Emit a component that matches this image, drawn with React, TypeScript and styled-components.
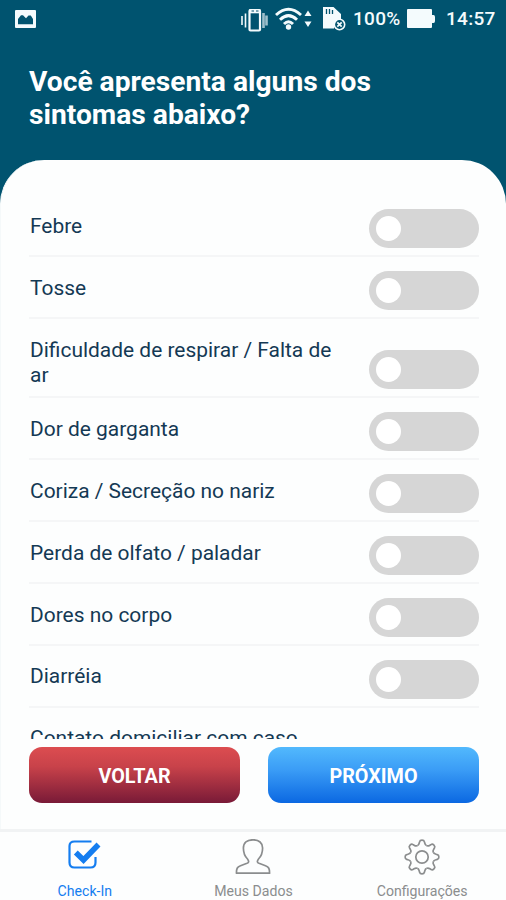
import React from "react";
import styled, { createGlobalStyle } from "styled-components";

const GlobalStyle = createGlobalStyle`
  * { box-sizing: border-box; }
  body { margin: 0; background: #fdfefe; font-family: Roboto, sans-serif; }
  svg { display: block; flex: none; }
`;

const Screen = styled.div`
  width: 506px;
  height: 900px;
  display: flex;
  flex-direction: column;
  overflow: hidden;
  background: #00536f;
`;

const StatusBar = styled.div`
  height: 40px;
  flex: none;
  display: flex;
  align-items: center;
  padding: 0 11px 3px 15px;
  color: #f4fbfd;
`;

const StatusGroup = styled.div`
  margin-left: auto;
  display: flex;
  align-items: center;
`;

const StatusText = styled.span<{ $width: number; $gap: number }>`
  width: ${(p) => p.$width}px;
  margin-left: ${(p) => p.$gap}px;
  font-size: 19px;
  font-weight: 500;
  line-height: 24px;
  letter-spacing: 0.3px;
  white-space: nowrap;
`;

const Title = styled.h1`
  flex: none;
  height: 120px;
  margin: 0;
  padding: 25px 29px 0;
  color: #fff;
  font-size: 28.2px;
  font-weight: 700;
  line-height: 33px;
`;

const Sheet = styled.main`
  flex: 1;
  min-height: 0;
  display: flex;
  flex-direction: column;
  padding: 35.5px 27px 0 28px;
  background: #fdfefe;
  border-left: 1px solid #f5f9fa;
  border-radius: 44px 44px 0 0;
`;

const List = styled.div`
  height: 543px;
  flex: none;
  overflow: hidden;
`;

const Row = styled.div`
  min-height: 61.9px;
  display: flex;
  align-items: flex-end;
  justify-content: space-between;
  padding: 18.8px 0 7px;
  border-bottom: 2px solid #f5f6f7;
`;

const Label = styled.span`
  align-self: flex-start;
  width: 316px;
  padding: 0 0 1px 1px;
  color: #143954;
  font-size: 20.95px;
  line-height: 25px;
`;

const Toggle = styled.button`
  width: 110px;
  height: 39px;
  flex: none;
  margin: -19px 0 0;
  padding: 0 7px;
  border: 0;
  border-radius: 20px;
  background: #d6d6d6;
  display: flex;
  align-items: center;
`;

const Knob = styled.span`
  width: 25px;
  height: 25px;
  border-radius: 50%;
  background: #fff;
`;

const Actions = styled.div`
  display: flex;
  justify-content: space-between;
  margin-top: 8.5px;
`;

const ActionButton = styled.button<{ $tone: "back" | "next" }>`
  width: 211px;
  height: 56px;
  padding: 2px 0 0;
  border: 0;
  border-radius: 13px;
  color: #fff;
  font-family: inherit;
  font-size: 19.8px;
  font-weight: 700;
  background: ${(p) =>
    p.$tone === "back"
      ? "linear-gradient(#dc4d50, #c8424a 35%, #791a37)"
      : "linear-gradient(#52b9fd, #3b9df6 40%, #0b68e2)"};
`;

const TabBar = styled.nav`
  height: 71px;
  flex: none;
  display: grid;
  grid-template-columns: repeat(3, 1fr);
  border-top: 3px solid #f1f3f4;
  background: #fdfefe;
`;

const Tab = styled.div<{ $active?: boolean }>`
  display: flex;
  flex-direction: column;
  align-items: center;
  padding: 7px 0 0 1px;
  color: ${(p) => (p.$active ? "#147df0" : "#8b8d8e")};
`;

const TabLabel = styled.span`
  margin-top: 7px;
  font-size: 14.1px;
  line-height: 18px;
`;

const symptoms = [
  "Febre",
  "Tosse",
  "Dificuldade de respirar / Falta de ar",
  "Dor de garganta",
  "Coriza / Secreção no nariz",
  "Perda de olfato / paladar",
  "Dores no corpo",
  "Diarréia",
  "Contato domiciliar com caso confirmado",
];

const PictureIcon = () => (
  <svg width="21" height="18" viewBox="0 0 21 18" fill="currentColor">
    <path fillRule="evenodd" d="M1 0H20Q21 0 21 1V17Q21 18 20 18H1Q0 18 0 17V1Q0 0 1 0ZM3 14.200H18V9L15.800 5.500H13.500L11 8.200 8 5.200H6L3 9Z" />
  </svg>
);

const StatusIcons = () => (
  <svg width="105" height="26" viewBox="241 5 105 26" fill="none" stroke="currentColor">
    <path d="M242 15V24M245.500 12.500V26.500" strokeWidth="1.600" />
    <path d="M263.500 12V27M266.500 14.500V24.500" strokeWidth="2.600" opacity=".65" />
    <rect x="249.500" y="9" width="10.500" height="20.500" rx="1" strokeWidth="2.200" />
    <path d="M249 10.300H260.500" strokeWidth="4" />
    <path d="M251.500 10H254M256 10H258.500" strokeWidth="1" stroke="#00536f" />
    <path d="M276 14Q288.500 2.500 301 14M280 18.700Q288.500 10.500 297 18.700M284 23Q288.500 18.500 293 23" strokeWidth="2.900" />
    <circle cx="288.500" cy="26" r="2.700" fill="currentColor" stroke="none" />
    <path d="M304.500 15L308 9.500 311.500 15ZM304.500 20.500H311.500L308 26Z" fill="currentColor" stroke="none" />
    <path d="M323 6H333.500L341 13V19L334 25.500V27.500H323Z" fill="currentColor" stroke="none" />
    <path d="M326.500 8V13M329.500 8V13M332.500 9V13" stroke="#00536f" strokeWidth="1.300" />
    <circle cx="339.500" cy="23.500" r="5.200" fill="#00536f" strokeWidth="1.600" />
    <path d="M337.300 21.300L341.700 25.700M341.700 21.300L337.300 25.700" strokeWidth="1.700" />
  </svg>
);

const BatteryIcon = () => (
  <svg width="28" height="20" viewBox="0 0 28 20" fill="currentColor">
    <path d="M1 0H24Q25 0 25 1V6H26.500Q28 6 28 8V12Q28 14 26.500 14H25V18Q25 19 24 19H1Q0 19 0 18V1Q0 0 1 0Z" />
  </svg>
);

const CheckIcon = () => (
  <svg width="36" height="36" viewBox="1 2 36 36" fill="none" stroke="currentColor">
    <path d="M25.500 4.500H8.500Q3.500 4.500 3.500 9V25.500Q3.500 30.500 8.500 30.500H24.500Q29.500 30.500 29.500 25.500V20" strokeWidth="2.200" />
    <path d="M9.800 15.500L17.500 23 32.500 7.500" strokeWidth="5.500" />
  </svg>
);

const PersonIcon = () => (
  <svg width="36" height="36" viewBox="0 1 36 36" fill="none" stroke="currentColor" strokeWidth="1.700" strokeLinejoin="round">
    <path d="M18 1.800C12 1.800 8.400 4.900 8.400 10C8.400 14.500 10 18.500 12.500 21C14.300 23.500 13.800 24.500 12 25.300L5.500 27.800C2 29.200 1.500 30.500 1.400 35.200H34.600C34.500 30.500 34 29.200 30.500 27.800L24 25.300C22.200 24.500 21.700 23.500 23.500 21C26 18.500 27.600 14.500 27.600 10C27.600 4.900 24 1.800 18 1.800Z" />
  </svg>
);

const gearTooth =
  "M-4.700 -11.350C-2.800 -11.800 -3 -13.500 -2.400 -15.300C-1.900 -17.400 1.900 -17.400 2.400 -15.300C3 -13.500 2.800 -11.800 4.700 -11.350";

const GearIcon = () => (
  <svg width="36" height="36" viewBox="-18 -18 36 36" fill="none" stroke="currentColor" strokeWidth="1.700">
    {[0, 45, 90, 135, 180, 225, 270, 315].map((angle) => (
      <path key={angle} d={gearTooth} transform={`rotate(${angle})`} />
    ))}
    <circle r="6.200" />
  </svg>
);

export default function App() {
  return (
    <>
      <GlobalStyle />
      <Screen>
        <StatusBar>
          <PictureIcon />
          <StatusGroup>
            <StatusIcons />
            <StatusText $width={48} $gap={7}>100%</StatusText>
            <StatusText as="div" $width={28} $gap={6}><BatteryIcon /></StatusText>
            <StatusText $width={49} $gap={11}>14:57</StatusText>
          </StatusGroup>
        </StatusBar>
        <Title>Você apresenta alguns dos sintomas abaixo?</Title>
        <Sheet>
          <List>
            {symptoms.map((symptom, index) => (
              <Row key={symptom}>
                <Label>{symptom}</Label>
                {index < 8 && (
                  <Toggle role="switch" aria-checked={false} aria-label={symptom}>
                    <Knob />
                  </Toggle>
                )}
              </Row>
            ))}
          </List>
          <Actions>
            <ActionButton $tone="back">VOLTAR</ActionButton>
            <ActionButton $tone="next">PRÓXIMO</ActionButton>
          </Actions>
        </Sheet>
        <TabBar>
          <Tab $active>
            <CheckIcon />
            <TabLabel>Check-In</TabLabel>
          </Tab>
          <Tab>
            <PersonIcon />
            <TabLabel>Meus Dados</TabLabel>
          </Tab>
          <Tab>
            <GearIcon />
            <TabLabel>Configurações</TabLabel>
          </Tab>
        </TabBar>
      </Screen>
    </>
  );
}
